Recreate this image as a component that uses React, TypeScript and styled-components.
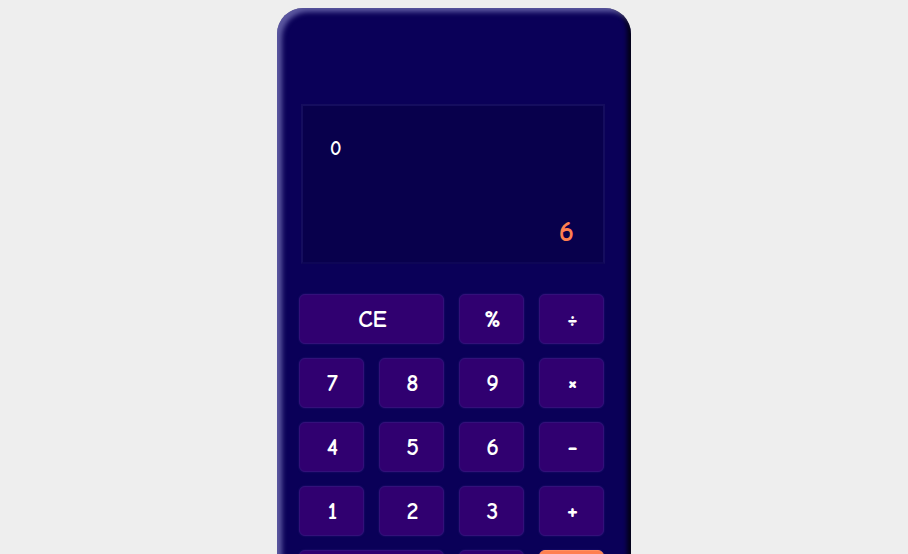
import React from "react";
import styled, { createGlobalStyle } from "styled-components";

const Global = createGlobalStyle`
  html, body { background: #eeeeee; }
  body {
    margin: 8px;
    font-family: "Comic Sans MS", "Comic Neue", "Lato", "DejaVu Sans", sans-serif;
  }
`;

const Page = styled.div`
  display: flex;
  justify-content: center;
`;

const Body = styled.div`
  width: 354px;
  box-sizing: border-box;
  background: #0a0058;
  border-radius: 26px;
  padding: 96px 26px 26px 22px;
  box-shadow: inset 5px 4px 5px rgba(160, 160, 220, 0.55),
    inset -4px -3px 4px rgba(0, 0, 0, 0.75);
`;

const Display = styled.div`
  height: 160px;
  margin-left: 2px;
  box-sizing: border-box;
  background: #08004c;
  border: 2px solid #150d5e;
  border-bottom-color: #0e0656;
  padding: 31px 29px 14px 27px;
  display: flex;
  flex-direction: column;
  justify-content: space-between;
`;

const Expr = styled.div`
  color: #ffffff;
  font-size: 20px;
  font-weight: 700;
  line-height: 24px;
`;

const Result = styled.div`
  color: #ff7f50;
  font-size: 29px;
  font-weight: 700;
  line-height: 32px;
  text-align: right;
`;

const Keys = styled.div`
  margin-top: 30px;
  display: grid;
  grid-template-columns: repeat(4, 65px);
  grid-auto-rows: 50px;
  column-gap: 15px;
  row-gap: 14px;
`;

const Key = styled.button<{ $span?: number; $op?: boolean; $accent?: boolean }>`
  grid-column: span ${(p) => p.$span ?? 1};
  border: 1px solid ${(p) => (p.$accent ? "#ff9060" : "#33107a")};
  border-radius: 6px;
  background: ${(p) => (p.$accent ? "#ff7f50" : "#300070")};
  box-shadow: 0 0 2px rgba(70, 40, 150, 0.5);
  color: #ffffff;
  font-family: inherit;
  font-size: ${(p) => (p.$op ? "26px" : "24px")};
  font-weight: 700;
  padding: 0 0 0 2px;
  display: flex;
  align-items: center;
  justify-content: center;
  cursor: pointer;
`;

export default function App() {
  return (
    <>
      <Global />
      <Page>
        <Body>
          <Display>
            <Expr>0</Expr>
            <Result>6</Result>
          </Display>
          <Keys>
            <Key $span={2}>CE</Key>
            <Key>%</Key>
            <Key $op>÷</Key>
            <Key>7</Key>
            <Key>8</Key>
            <Key>9</Key>
            <Key $op>×</Key>
            <Key>4</Key>
            <Key>5</Key>
            <Key>6</Key>
            <Key $op>-</Key>
            <Key>1</Key>
            <Key>2</Key>
            <Key>3</Key>
            <Key $op>+</Key>
            <Key $span={2}>0</Key>
            <Key>.</Key>
            <Key $accent>=</Key>
          </Keys>
        </Body>
      </Page>
    </>
  );
}
